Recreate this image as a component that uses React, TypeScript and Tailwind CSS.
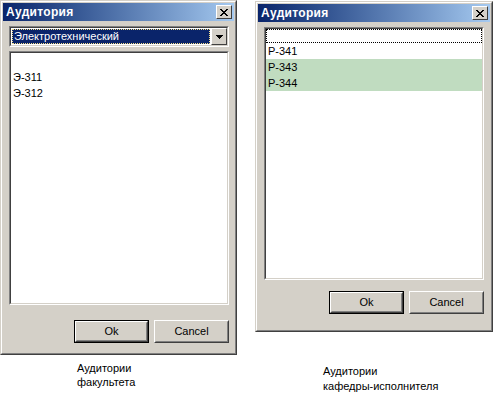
import type { ReactNode } from "react";

const face = "bg-[#d4d0c8]";

function Win({ className, children }: { className: string; children: ReactNode }) {
  return (
    <div
      className={`${className} ${face} border border-t-[#d4d0c8] border-l-[#d4d0c8] border-r-[#404040] border-b-[#404040]`}
    >
      <div className="flex h-full flex-col border border-t-white border-l-white border-r-[#808080] border-b-[#808080] p-px">
        <div className="flex h-[18px] items-center justify-between bg-gradient-to-r from-[#0a246a] to-[#a6caf0] pl-[3px] pr-[2px]">
          <span className="text-[12px] font-bold leading-none tracking-[0.3px] text-white">Аудитория</span>
          <span className="flex h-[14px] w-[16px] items-center justify-center border border-t-white border-l-white border-r-[#404040] border-b-[#404040] bg-[#d4d0c8]">
            <svg width="8" height="7" viewBox="0 0 8 7" shapeRendering="crispEdges">
              <path d="M0 0h2v1h-2zM6 0h2v1h-2zM1 1h2v1h-2zM5 1h2v1h-2zM2 2h4v1h-4zM3 3h2v1h-2zM2 4h4v1h-4zM1 5h2v1h-2zM5 5h2v1h-2zM0 6h2v1h-2zM6 6h2v1h-2z" fill="#000" />
            </svg>
          </span>
        </div>
        {children}
      </div>
    </div>
  );
}

function Sunken({ className, children }: { className: string; children?: ReactNode }) {
  return (
    <div className={`${className} border border-t-[#808080] border-l-[#808080] border-r-white border-b-white`}>
      <div className="h-full border border-t-[#404040] border-l-[#404040] border-r-[#d4d0c8] border-b-[#d4d0c8] bg-white">
        {children}
      </div>
    </div>
  );
}

function Btn({ label, isDefault }: { label: string; isDefault?: boolean }) {
  return (
    <div className={`h-[23px] w-[75px] ${isDefault ? "border border-black" : ""}`}>
      <div className="h-full border border-t-white border-l-white border-r-[#404040] border-b-[#404040]">
        <div className="flex h-full items-center justify-center border border-t-[#d4d0c8] border-l-[#d4d0c8] border-r-[#808080] border-b-[#808080] text-[11px] text-black">
          {label}
        </div>
      </div>
    </div>
  );
}

export default function App() {
  return (
    <div className="flex h-[401px] w-[493px] items-start bg-white font-['Liberation_Sans',Arial,sans-serif] text-[11px] text-black">
      <div className="flex w-[237px] shrink-0 flex-col">
        <Win className="h-[355px] w-[237px]">
          <div className="flex flex-1 flex-col pl-[6px] pr-[5px] pt-[5px] pb-[9px]">
            <div className="flex h-[21px] border border-t-[#808080] border-l-[#808080] border-r-white border-b-white">
              <div className="flex flex-1 border border-t-[#404040] border-l-[#404040] border-r-[#d4d0c8] border-b-[#d4d0c8] bg-white">
                <div className="flex flex-1 p-px">
                  <div className="flex flex-1 items-center border border-dotted border-[#f5e08a] bg-[#0a246a] pl-[1px] text-white">
                    Электротехнический
                  </div>
                </div>
                <div className="flex w-[16px] items-center justify-center border border-t-white border-l-white border-r-[#404040] border-b-[#404040] bg-[#d4d0c8]">
                  <svg width="7" height="4" viewBox="0 0 7 4" shapeRendering="crispEdges">
                    <path d="M0 0h7v1h-7zM1 1h5v1h-5zM2 2h3v1h-3zM3 3h1v1h-1z" fill="#000" />
                  </svg>
                </div>
              </div>
            </div>
            <Sunken className="mt-[4px] h-[254px]">
              <div className="flex flex-col pt-px">
                <div className="h-[15px]" />
                <div className="flex h-[16px] items-center pl-[2px]">Э-311</div>
                <div className="flex h-[16px] items-center pl-[2px]">Э-312</div>
              </div>
            </Sunken>
            <div className="mt-auto flex justify-end gap-[5px]">
              <Btn label="Ok" isDefault />
              <Btn label="Cancel" />
            </div>
          </div>
        </Win>
        <div className="mt-[6px] pl-[77px] leading-[14px]">
          <div>Аудитории</div>
          <div>факультета</div>
        </div>
      </div>

      <div className="ml-[18px] flex w-[238px] shrink-0 flex-col pt-px">
        <Win className="h-[331px] w-[238px]">
          <div className="flex flex-1 flex-col pl-[6px] pr-[6px] pt-[5px] pb-[15px]">
            <Sunken className="h-[253px]">
              <div className="flex flex-col">
                <div className="h-[14px] border border-dotted border-black" />
                <div className="flex h-[16px] items-center pl-[2px]">Р-341</div>
                <div className="flex h-[16px] items-center bg-[#c0dcc0] pl-[2px]">Р-343</div>
                <div className="flex h-[16px] items-center bg-[#c0dcc0] pl-[2px]">Р-344</div>
              </div>
            </Sunken>
            <div className="mt-auto flex justify-end gap-[5px]">
              <Btn label="Ok" isDefault />
              <Btn label="Cancel" />
            </div>
          </div>
        </Win>
        <div className="mt-[32px] pl-[68px] leading-[15px]">
          <div>Аудитории</div>
          <div>кафедры-исполнителя</div>
        </div>
      </div>
    </div>
  );
}
